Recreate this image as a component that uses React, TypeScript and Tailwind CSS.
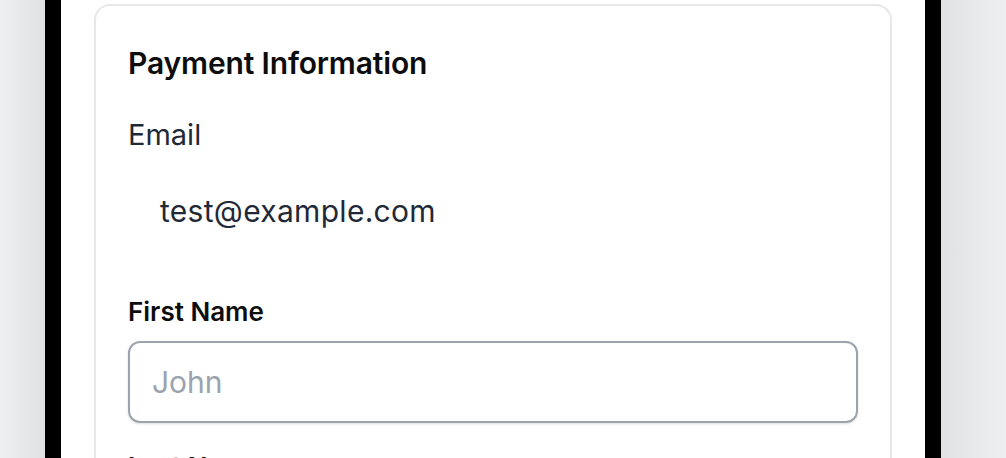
export default function App() {
  return (
    <div className="flex h-[458px] w-full overflow-hidden bg-white" style={{ fontFamily: 'Inter, "Noto Sans", sans-serif' }}>
      <div className="w-[45px] shrink-0 bg-gradient-to-r from-[#eeeff1] to-[#e1e2e4]" />
      <div className="w-[16px] shrink-0 bg-black" />
      <div className="flex-1 bg-white px-[33px] pt-[4px]">
        <div className="h-[520px] rounded-t-[16px] border-2 border-b-0 border-[#e5e7eb] px-[32px] pt-[40px]">
          <h2 className="text-[30px] font-semibold leading-[34px] tracking-[-0.005em] text-[#0d0d0d]">Payment Information</h2>
          <div className="mt-[38px] text-[29px] leading-[34px] text-[#1f2937]">Email</div>
          <div className="mt-[42px] pl-[32px] text-[30px] leading-[34px] tracking-[0.01em] text-[#1f2937]">test@example.com</div>
          <div className="mt-[68px] text-[26px] font-semibold leading-[32px] text-[#0d0d0d]">First Name</div>
          <div className="mt-[13px] flex h-[82px] items-center rounded-[12px] border-2 border-[#9ca3af] pl-[22px] text-[30px] text-[#9ca3af] shadow-sm">
            John
          </div>
          <div className="mt-[28px] text-[26px] font-semibold leading-[32px] text-[#0d0d0d]">Last Name</div>
        </div>
      </div>
      <div className="w-[16px] shrink-0 bg-black" />
      <div className="w-[65px] shrink-0 bg-gradient-to-r from-[#e1e2e4] to-[#eeeff1]" />
    </div>
  );
}
